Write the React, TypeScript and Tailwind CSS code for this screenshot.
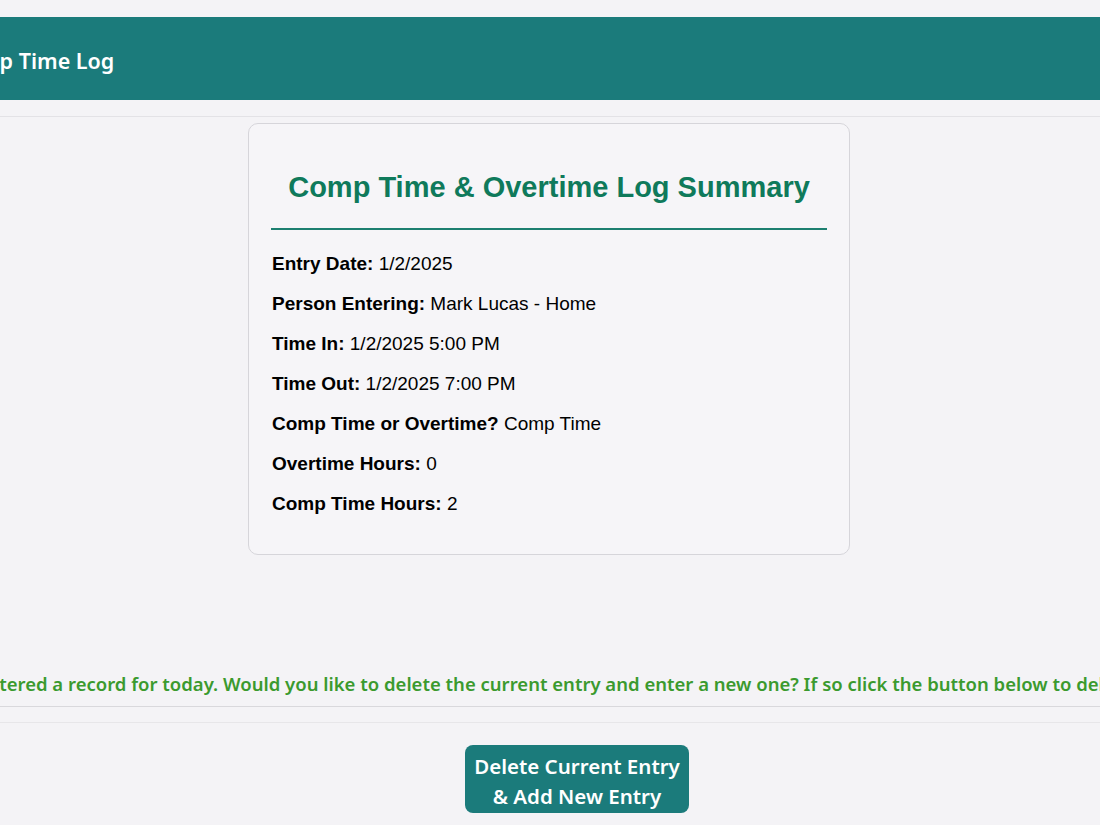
const FIELDS: [string, string][] = [
  ["Entry Date:", "1/2/2025"],
  ["Person Entering:", "Mark Lucas - Home"],
  ["Time In:", "1/2/2025 5:00 PM"],
  ["Time Out:", "1/2/2025 7:00 PM"],
  ["Comp Time or Overtime?", "Comp Time"],
  ["Overtime Hours:", "0"],
  ["Comp Time Hours:", "2"],
];

const UI_FONT = "font-['Noto_Sans',sans-serif]";

export default function App() {
  return (
    <div className="min-h-screen overflow-hidden bg-[#f4f3f6] pt-[17px]">
      <header className="flex h-[83px] items-center bg-[#1b7b7b] pt-[5px]">
        <span
          className={`-ml-[48px] whitespace-nowrap text-[21.5px] font-semibold text-white ${UI_FONT}`}
        >
          Comp Time Log
        </span>
      </header>
      <div className="mt-[16px] h-px bg-[#e3e2e6]" />

      <div className="flex justify-center pr-[2px]">
        <section className="mt-[6px] h-[432px] w-[602px] rounded-[10px] border border-[#d6d5da] bg-[#f6f5f8] px-[22px] font-['Liberation_Sans',Arial,sans-serif]">
          <h2 className="pt-[47px] text-center text-[29px] font-bold leading-[32px] text-[#0f7a5b]">
            Comp Time &amp; Overtime Log Summary
          </h2>
          <div className="mt-[25px] h-[2px] bg-[#1d7f70]" />
          <div className="mt-[14px] pl-px text-[19px] leading-[40px] text-black">
            {FIELDS.map(([label, value]) => (
              <p key={label}>
                <span className="font-bold">{label}</span> {value}
              </p>
            ))}
          </div>
        </section>
      </div>

      <p
        className={`mt-[117px] -ml-[182px] whitespace-nowrap text-[18.5px] font-semibold leading-[24px] text-[#3b9a2e] ${UI_FONT}`}
      >
        You have already entered a record for today. Would you like to delete the current entry and
        enter a new one? If so click the button below to delete the current entry.
      </p>
      <div className="mt-[10px] h-px bg-[#d9d8dc]" />
      <div className="mt-[15px] h-px bg-[#e7e6e9]" />

      <div className="mt-[22px] flex justify-center pl-[54px]">
        <button
          type="button"
          className={`h-[68px] w-[224px] rounded-[8px] bg-[#1b7b7b] pt-[3px] text-[20.5px] font-semibold leading-[30px] text-white ${UI_FONT}`}
        >
          Delete Current Entry
          <br />
          &amp; Add New Entry
        </button>
      </div>
    </div>
  );
}
